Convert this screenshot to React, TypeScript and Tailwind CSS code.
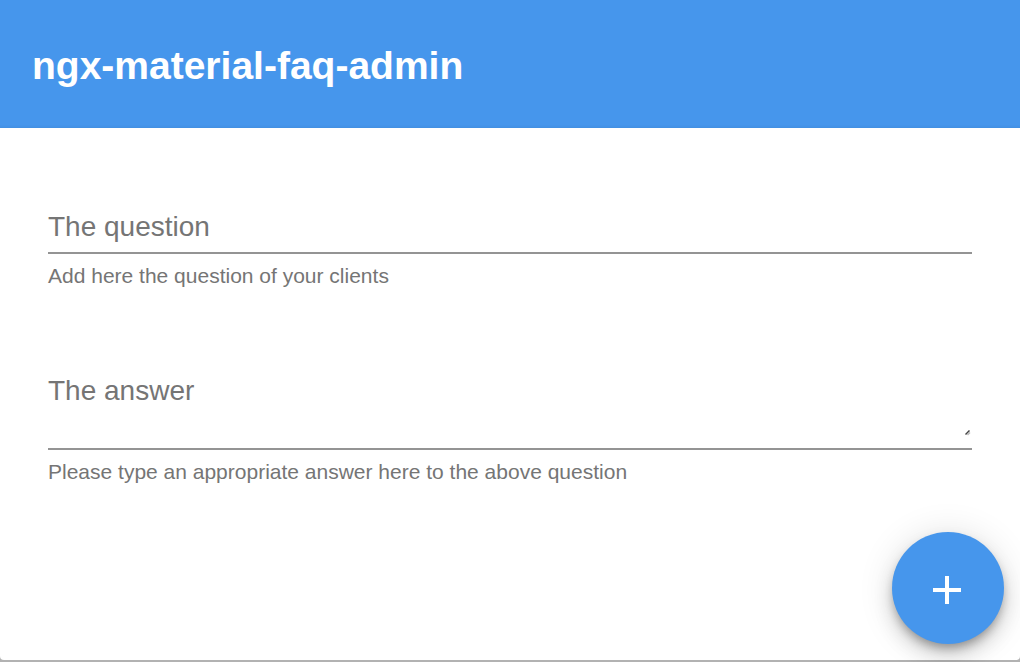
export default function App() {
  return (
    <div className="flex min-h-screen flex-col bg-[#b2b2b2] pb-0.5 font-['Liberation_Sans',Arial,sans-serif]">
      <main className="relative flex grow flex-col rounded-b bg-white">
        <header className="flex h-32 items-center bg-[#4696ec] px-8 pt-1 shadow-[inset_0_-4px_3px_-3px_rgba(0,0,0,0.06)]">
          <h1 className="text-[39px] leading-12 font-bold text-white">ngx-material-faq-admin</h1>
        </header>
        <form className="flex flex-col gap-16 px-12 pt-[76px]">
          <div className="flex flex-col">
            <div className="grid border-b-2 border-[#949494]">
              <input
                id="question"
                type="text"
                placeholder=" "
                aria-describedby="question-hint"
                className="peer col-start-1 row-start-1 h-12 w-full text-[28px] leading-10 text-[#333] outline-none"
              />
              <label
                htmlFor="question"
                className="pointer-events-none invisible col-start-1 row-start-1 pt-[3px] text-[28px] leading-10 text-[#757575] peer-placeholder-shown:visible"
              >
                The question
              </label>
            </div>
            <p id="question-hint" className="pt-1.5 text-[21px] leading-8 text-[#757575]">
              Add here the question of your clients
            </p>
          </div>
          <div className="flex flex-col">
            <div className="relative grid border-b-2 border-[#949494] pt-3 pb-3">
              <textarea
                id="answer"
                rows={1}
                placeholder=" "
                aria-describedby="answer-hint"
                className="peer col-start-1 row-start-1 block h-17 w-full resize-none text-[28px] leading-10 text-[#333] outline-none"
              />
              <label
                htmlFor="answer"
                className="pointer-events-none invisible col-start-1 row-start-1 pt-[3px] text-[28px] leading-10 text-[#757575] peer-placeholder-shown:visible"
              >
                The answer
              </label>
              <svg viewBox="0 0 6 6" className="absolute right-px bottom-3 size-1.5" aria-hidden="true">
                <path d="M0.5 4.5 4.5 0.5" stroke="#444" strokeWidth="1.5" />
                <path d="M2.5 5 5 2.5" stroke="#bbb" strokeWidth="1.5" />
              </svg>
            </div>
            <p id="answer-hint" className="pt-1.5 text-[21px] leading-8 text-[#757575]">
              Please type an appropriate answer here to the above question
            </p>
          </div>
        </form>
        <button
          type="button"
          aria-label="Add question"
          className="absolute right-4 bottom-4 flex size-28 items-center justify-center rounded-full bg-[#4696ec] pt-1 pr-0.5 text-white shadow-[0_6px_10px_-2px_rgba(0,0,0,0.3),0_12px_20px_rgba(0,0,0,0.14),0_2px_36px_rgba(0,0,0,0.12)]"
        >
          <svg viewBox="0 0 24 24" className="size-12" fill="currentColor" aria-hidden="true">
            <path d="M19 13h-6v6h-2v-6H5v-2h6V5h2v6h6v2z" />
          </svg>
        </button>
      </main>
    </div>
  );
}
